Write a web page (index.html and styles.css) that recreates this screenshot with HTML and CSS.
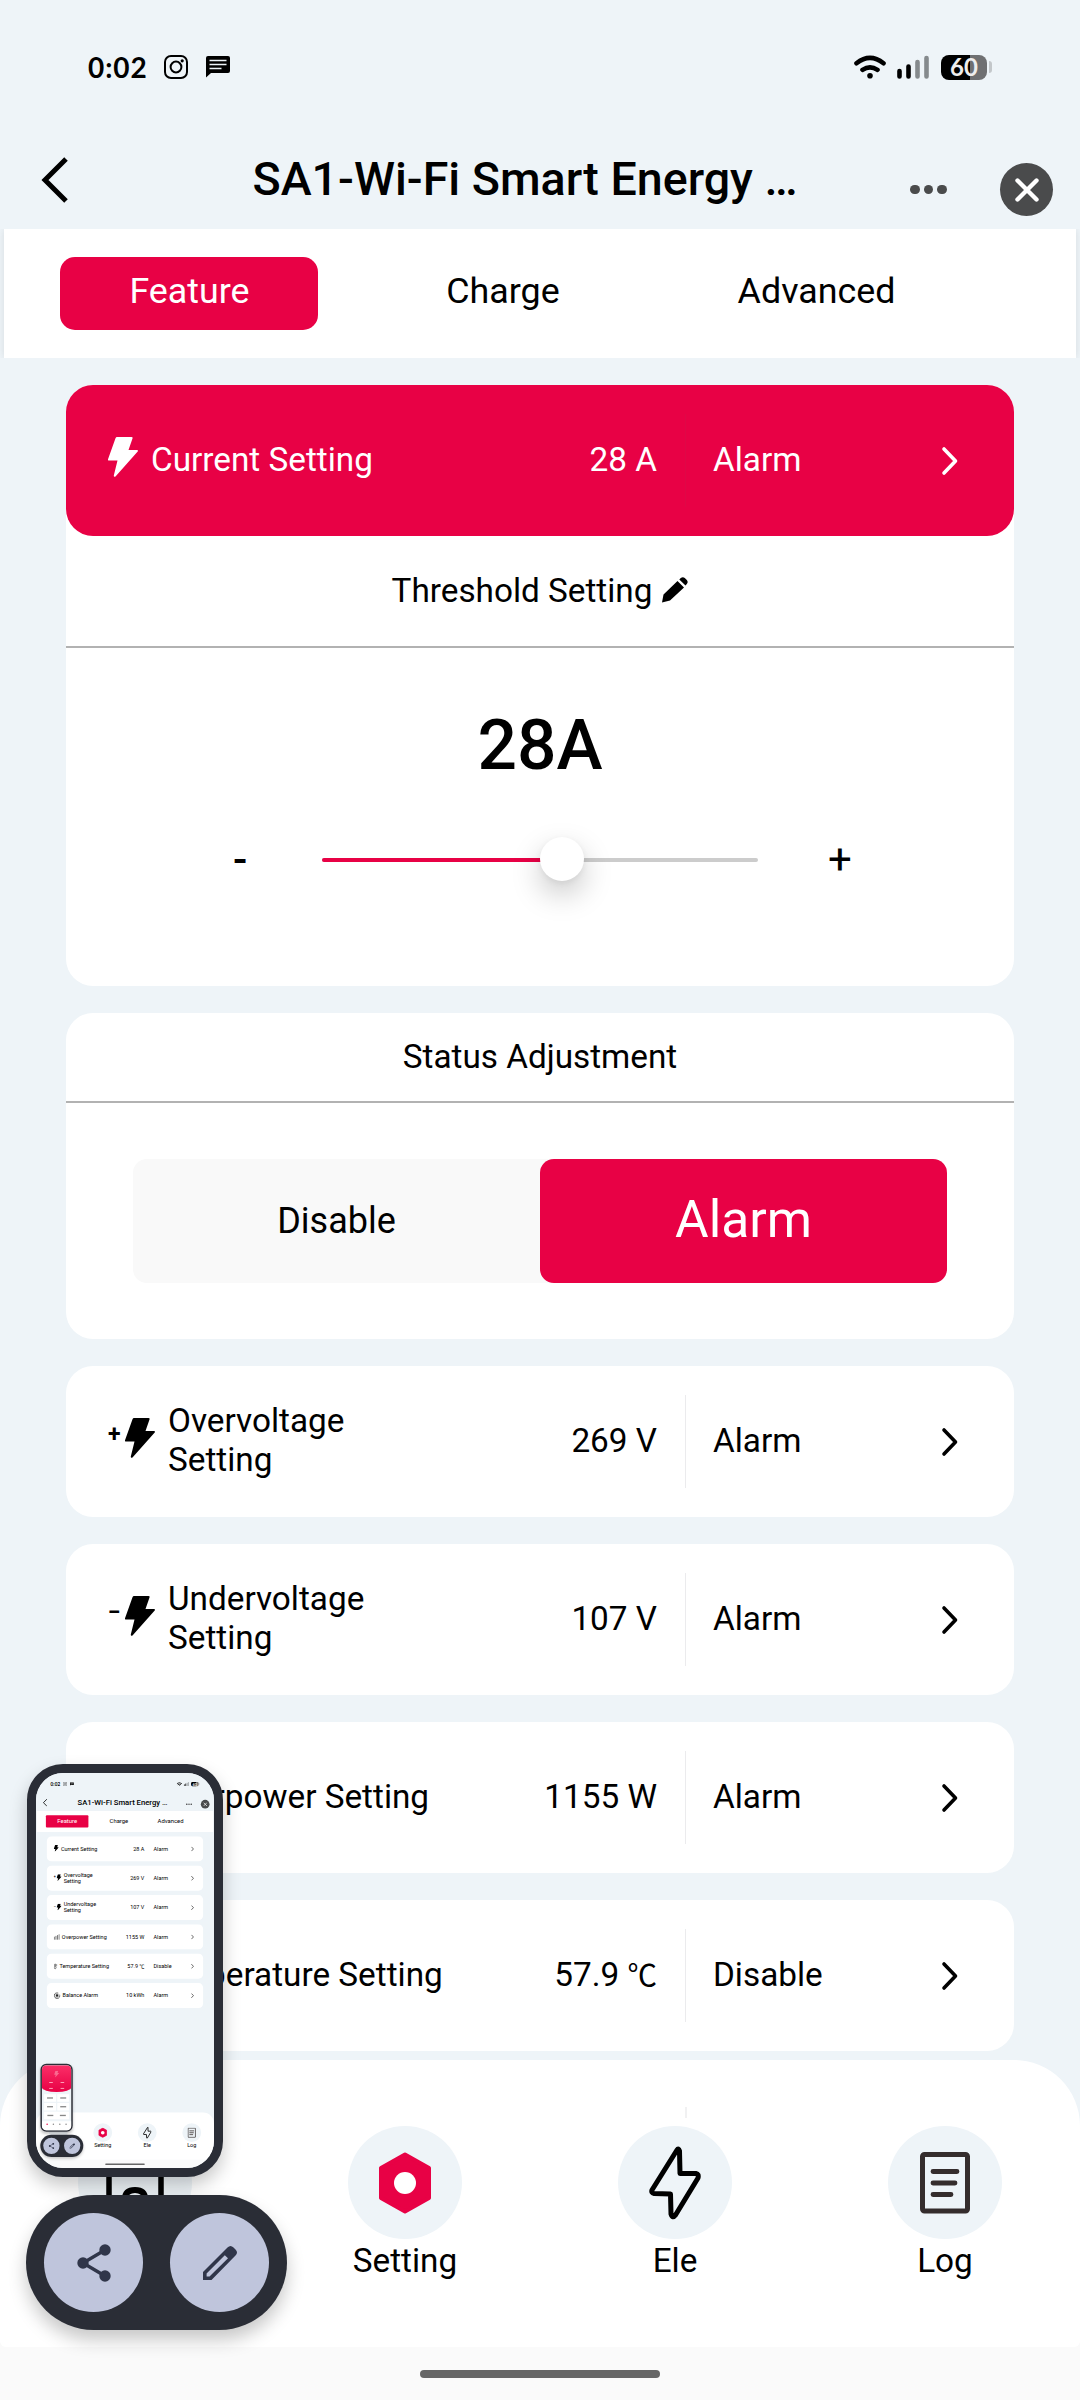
FILE: index.html
```html
<!DOCTYPE html>
<html lang="en">

<head>
    <meta charset="utf-8">
    <meta name="viewport" content="width=device-width, initial-scale=1.0">
    <title>Smart Energy</title>
    <link rel="stylesheet" href="styles.css">
</head>

<body>
    <!-- icons -->
    <svg class="sprite" width="0" height="0">
        <symbol id="i-bolt" viewBox="0 0 30 40">
            <path d="M9 0h14.500q1.500 0 1 1.500L20.500 13H29q1.500 0 .7 1.500L7.500 39.500q-1.800 1-1.700-1L9.500 23.500H1q-1.400 0-.9-1.500L7.500 1.200Q8 0 9 0z" fill="currentColor" />
        </symbol>
        <symbol id="i-next" viewBox="0 0 18 30">
            <path d="M3 3l11.500 12L3 27" fill="none" stroke="currentColor" stroke-width="3.600" stroke-linecap="round" stroke-linejoin="round" />
        </symbol>
        <symbol id="i-back" viewBox="0 0 28 46">
            <path d="M25 2L4 23l21 21" fill="none" stroke="#000" stroke-width="5" />
        </symbol>
        <symbol id="i-ins" viewBox="0 0 24 24">
            <rect x="1" y="1" width="22" height="22" rx="6" fill="none" stroke="#000" stroke-width="2" />
            <circle cx="12" cy="12" r="5.400" fill="none" stroke="#000" stroke-width="2" />
            <circle cx="18.200" cy="5.800" r="1.600" />
        </symbol>
        <symbol id="i-chat" viewBox="0 0 24 22">
            <path d="M2 0h20q2 0 2 2v13q0 2-2 2H5l-5 4.500V2Q0 0 2 0z" />
            <path d="M3.500 4.500h17M3.500 8.500h17M3.500 12.500h12" stroke="#eef4f8" stroke-width="1.500" />
        </symbol>
        <symbol id="i-wifi" viewBox="0 0 32 24">
            <path d="M2.500 8.300Q16-2.500 29.500 8.300M8.500 14.800q7.500-5 15 0" fill="none" stroke="#000" stroke-width="4.600" stroke-linecap="round" />
            <circle cx="16" cy="20.800" r="2.800" />
        </symbol>
        <symbol id="i-signal" viewBox="0 0 32 24">
            <path d="M2.500 16v5.500M11.500 11.500v10" stroke="#000" stroke-width="4.600" stroke-linecap="round" />
            <path d="M20.500 7v14.500M29.500 3v18.500" stroke="#858a8d" stroke-width="4.600" stroke-linecap="round" />
        </symbol>
        <symbol id="i-hex" viewBox="0 0 54 62">
            <path d="M27 2.500L51 16v30L27 59.500 3 46V16z" fill="#e80145" stroke="#e80145" stroke-width="4" stroke-linejoin="round" />
            <circle cx="27" cy="31" r="11" fill="#fff" />
        </symbol>
        <symbol id="i-ele" viewBox="0 0 54 74">
            <path d="M29 4L4 44q-1 3 2 3.500l16.500.5L23 68q1.500 5 4.500 1L50 32q1-4-2-4.500H32L31.500 5Q30.500 1.500 29 4z" fill="none" stroke="#000" stroke-width="5" stroke-linejoin="round" />
        </symbol>
        <symbol id="i-log" viewBox="0 0 50 62">
            <rect x="2.500" y="2.500" width="45" height="56.500" rx="2" fill="none" stroke="#352d2d" stroke-width="5" />
            <path d="M13 19.500h24M13 31h22M13 42.500h18" stroke="#352d2d" stroke-width="4.800" stroke-linecap="round" />
        </symbol>
        <symbol id="i-home" viewBox="0 0 60 64">
            <path d="M4 4h52v56H4z" fill="none" stroke="#000" stroke-width="5.500" />
            <path d="M20 60V48q0-9 10-9t10 9v12" fill="none" stroke="#000" stroke-width="6" />
        </symbol>
        <symbol id="i-share" viewBox="0 0 34 38">
            <path d="M28 6L6 19l22 13" fill="none" stroke="#30364a" stroke-width="3.400" />
            <circle cx="28" cy="6" r="5.700" fill="#30364a" />
            <circle cx="6" cy="19" r="5.700" fill="#30364a" />
            <circle cx="28" cy="32" r="5.700" fill="#30364a" />
        </symbol>
        <symbol id="i-edit" viewBox="0 0 34 34">
            <path fill-rule="evenodd" d="M0 26L24.500 1.500q3-3 6 0l2 2q3 3 0 6L8.500 34H0zM3.600 27.600v2.900h2.900L25 12.300 21.800 9.200z" fill="#30364a" />
        </symbol>
    </svg>

    <div class="page">
        <div class="status">
            <span class="time">0:02</span>
            <svg class="ins"><use href="#i-ins" /></svg>
            <svg class="chat"><use href="#i-chat" /></svg>
            <svg class="wifi"><use href="#i-wifi" /></svg>
            <svg class="signal"><use href="#i-signal" /></svg>
            <span class="battery">60</span>
            <span class="battery_cap"></span>
        </div>

        <div class="header">
            <svg class="back"><use href="#i-back" /></svg>
            <h1>SA1-Wi-Fi Smart Energy …</h1>
            <div class="more"><i></i><i></i><i></i></div>
            <div class="close"><svg viewBox="0 0 24 24"><path d="M2.500 2.500l19 19M21.500 2.500l-19 19" /></svg></div>
        </div>

        <div class="tabs">
            <span class="tab on">Feature</span>
            <span class="tab">Charge</span>
            <span class="tab">Advanced</span>
        </div>

        <div class="list">
            <div class="open">
                <div class="row active">
                    <svg class="bolt"><use href="#i-bolt" /></svg>
                    <span class="name">Current Setting</span>
                    <span class="value">28 A</span>
                    <span class="state">Alarm</span>
                    <svg class="next"><use href="#i-next" /></svg>
                </div>
                <div class="panel_title threshold">
                    Threshold Setting
                    <svg class="pen" viewBox="0 0 26 26">
                        <path d="M0 25.500l1.500-8L15.500 4 22 10.500 8 23.500zM17.300 2.500l1.500-1.500q2-1.600 4 0l2 2q1.700 2 0 4L23.500 8.500z" />
                    </svg>
                </div>
                <div class="panel_body">
                    <p class="number">28A</p>
                    <div class="slider">
                        <span class="minus">-</span>
                        <div class="track">
                            <div class="fill"></div>
                            <div class="thumb"></div>
                        </div>
                        <span class="plus">+</span>
                    </div>
                </div>
            </div>

            <div class="adjust">
                <div class="panel_title">Status Adjustment</div>
                <div class="switch">
                    <span>Disable</span>
                    <span class="on">Alarm</span>
                </div>
            </div>

            <div class="row">
                <span class="sign">+</span>
                <svg class="bolt"><use href="#i-bolt" /></svg>
                <span class="name">Overvoltage<br>Setting</span>
                <span class="value">269 V</span>
                <span class="state">Alarm</span>
                <svg class="next"><use href="#i-next" /></svg>
            </div>
            <div class="row">
                <span class="sign">−</span>
                <svg class="bolt"><use href="#i-bolt" /></svg>
                <span class="name">Undervoltage<br>Setting</span>
                <span class="value">107 V</span>
                <span class="state">Alarm</span>
                <svg class="next"><use href="#i-next" /></svg>
            </div>
            <div class="row">
                <svg class="bars" viewBox="0 0 44 44"><path d="M4 20v22M16 14v28M28 8v34M40 2v40" /></svg>
                <span class="name">Overpower Setting</span>
                <span class="value">1155 W</span>
                <span class="state">Alarm</span>
                <svg class="next"><use href="#i-next" /></svg>
            </div>
            <div class="row">
                <svg class="temp" viewBox="0 0 28 44"><path d="M7 27V7q0-4 4-4t4 4v20q5 3 3 9-3 6-7 6t-7-6q-2-6 3-9zM25 4v18" /></svg>
                <span class="name">Temperature Setting</span>
                <span class="value">57.9 <span class="unit">℃</span></span>
                <span class="state">Disable</span>
                <svg class="next"><use href="#i-next" /></svg>
            </div>
        </div>

        <div class="bottom">
            <div class="nav">
                <div class="item"><div class="dot"><svg class="home"><use href="#i-home" /></svg></div>Home</div>
                <div class="item"><div class="dot"><svg class="hex"><use href="#i-hex" /></svg></div>Setting</div>
                <div class="item"><div class="dot"><svg class="ele"><use href="#i-ele" /></svg></div>Ele</div>
                <div class="item"><div class="dot"><svg class="log"><use href="#i-log" /></svg></div>Log</div>
                <div class="tick"></div>
            </div>
            <div class="gesture"></div>
        </div>

        <!-- screenshot preview -->
        <div class="phone">
            <div class="screen">
                <div class="page">
                    <div class="status">
                        <span class="time">0:02</span>
                        <svg class="ins"><use href="#i-ins" /></svg>
                        <svg class="chat"><use href="#i-chat" /></svg>
                        <svg class="wifi"><use href="#i-wifi" /></svg>
                        <svg class="signal"><use href="#i-signal" /></svg>
                        <span class="battery">60</span>
                        <span class="battery_cap"></span>
                    </div>
                    <div class="header">
                        <svg class="back"><use href="#i-back" /></svg>
                        <h1>SA1-Wi-Fi Smart Energy …</h1>
                        <div class="more"><i></i><i></i><i></i></div>
                        <div class="close"><svg viewBox="0 0 24 24"><path d="M2.500 2.500l19 19M21.500 2.500l-19 19" /></svg></div>
                    </div>
                    <div class="tabs">
                        <span class="tab on">Feature</span>
                        <span class="tab">Charge</span>
                        <span class="tab">Advanced</span>
                    </div>
                    <div class="list">
                        <div class="row">
                            <svg class="bolt"><use href="#i-bolt" /></svg>
                            <span class="name">Current Setting</span>
                            <span class="value">28 A</span>
                            <span class="state">Alarm</span>
                            <svg class="next"><use href="#i-next" /></svg>
                        </div>
                        <div class="row">
                            <span class="sign">+</span>
                            <svg class="bolt"><use href="#i-bolt" /></svg>
                            <span class="name">Overvoltage<br>Setting</span>
                            <span class="value">269 V</span>
                            <span class="state">Alarm</span>
                            <svg class="next"><use href="#i-next" /></svg>
                        </div>
                        <div class="row">
                            <span class="sign">−</span>
                            <svg class="bolt"><use href="#i-bolt" /></svg>
                            <span class="name">Undervoltage<br>Setting</span>
                            <span class="value">107 V</span>
                            <span class="state">Alarm</span>
                            <svg class="next"><use href="#i-next" /></svg>
                        </div>
                        <div class="row">
                            <svg class="bars" viewBox="0 0 44 44"><path d="M4 20v22M16 14v28M28 8v34M40 2v40" /></svg>
                            <span class="name">Overpower Setting</span>
                            <span class="value">1155 W</span>
                            <span class="state">Alarm</span>
                            <svg class="next"><use href="#i-next" /></svg>
                        </div>
                        <div class="row">
                            <svg class="temp" viewBox="0 0 28 44"><path d="M7 27V7q0-4 4-4t4 4v20q5 3 3 9-3 6-7 6t-7-6q-2-6 3-9zM25 4v18" /></svg>
                            <span class="name">Temperature Setting</span>
                            <span class="value">57.9 <span class="unit">℃</span></span>
                            <span class="state">Disable</span>
                            <svg class="next"><use href="#i-next" /></svg>
                        </div>
                        <div class="row">
                            <svg class="balance" viewBox="0 0 44 44"><path d="M30 4.500a19 19 0 1 0 10 11M16 13h12v8H16zM16 21h12v9H16z" /></svg>
                            <span class="name">Balance Alarm</span>
                            <span class="value">10 kWh</span>
                            <span class="state">Alarm</span>
                            <svg class="next"><use href="#i-next" /></svg>
                        </div>
                    </div>
                    <div class="bottom">
                        <div class="nav">
                            <div class="item"><div class="dot"></div></div>
                            <div class="item"><div class="dot"><svg class="hex"><use href="#i-hex" /></svg></div>Setting</div>
                            <div class="item"><div class="dot"><svg class="ele"><use href="#i-ele" /></svg></div>Ele</div>
                            <div class="item"><div class="dot"><svg class="log"><use href="#i-log" /></svg></div>Log</div>
                        </div>
                        <div class="gesture"></div>
                    </div>
                    <div class="phone">
                        <div class="screen inner">
                            <div class="hero">
                                <svg class="bolt"><use href="#i-bolt" /></svg>
                                <i></i><i></i><i></i><i></i>
                            </div>
                            <div class="tiles">
                                <div><i></i></div>
                                <div><i></i></div>
                                <div><i></i></div>
                                <div><i></i></div>
                                <div class="wide"><i></i><i></i></div>
                            </div>
                            <div class="foot"><i></i><i></i><i></i><i></i></div>
                        </div>
                    </div>
                    <div class="tools">
                        <span><svg class="share"><use href="#i-share" /></svg></span>
                        <span><svg class="edit"><use href="#i-edit" /></svg></span>
                    </div>
                </div>
            </div>
        </div>
        <div class="tools">
            <span><svg class="share"><use href="#i-share" /></svg></span>
            <span><svg class="edit"><use href="#i-edit" /></svg></span>
        </div>
    </div>
</body>

</html>
```
FILE: styles.css
```css
* {
    padding: 0;
    margin: 0;
    box-sizing: border-box;
}

body {
    width: 1080px;
    height: 2400px;
    overflow: hidden;
    font-family: Roboto, "Noto Sans CJK SC", sans-serif;
    color: #000;
}

.sprite {
    position: absolute;
}

svg {
    display: block;
    flex-shrink: 0;
}

.page {
    position: relative;
    width: 1080px;
    height: 2400px;
    overflow: hidden;
    background: #eef4f8;
    font-size: 33.3px;
}

/* status bar */
.status {
    height: 130px;
    padding: 4px 88px 0;
    display: flex;
    align-items: center;
}

.time {
    width: 76px;
    margin-top: -1px;
    font-family: Lato, sans-serif;
    font-size: 28px;
    font-weight: bold;
    letter-spacing: .9px;
}

.ins {
    width: 24px;
    height: 24px;
    margin-right: 18px;
}

.chat {
    width: 24px;
    height: 22px;
}

.wifi {
    width: 32px;
    height: 24px;
    margin-left: auto;
    margin-right: 11px;
}

.signal {
    width: 32px;
    height: 24px;
    margin-right: 12px;
}

.battery {
    width: 46px;
    height: 25px;
    line-height: 24px;
    border-radius: 8px;
    background: linear-gradient(to right, #000 29px, #6f7072 29px);
    color: #eee;
    font-family: Lato, sans-serif;
    font-size: 24px;
    font-weight: bold;
    text-align: center;
}

.battery_cap {
    width: 3px;
    height: 12px;
    margin-left: 2px;
    border-radius: 0 3px 3px 0;
    background: #c3c7ca;
}

/* title bar */
.header {
    height: 99px;
    padding: 0 27px 0 41px;
    display: flex;
    align-items: center;
}

.back {
    width: 28px;
    height: 46px;
}

.header h1 {
    flex: 1;
    margin-top: -2px;
    padding-left: 71px;
    font-size: 46.6px;
    font-weight: 500;
    text-align: center;
    white-space: nowrap;
}

.more {
    width: 90px;
    margin-top: 20px;
    display: flex;
    gap: 4px;
}

.more i {
    width: 9.5px;
    height: 9.5px;
    border-radius: 50%;
    background: #4a4b4c;
}

.close {
    width: 53px;
    height: 53px;
    margin-top: 20px;
    border-radius: 50%;
    background: #4a4b4c;
    display: flex;
    align-items: center;
    justify-content: center;
}

.close svg {
    width: 24px;
    height: 24px;
}

.close path {
    stroke: #fff;
    stroke-width: 4.4;
    stroke-linecap: round;
}

/* tabs */
.tabs {
    height: 129px;
    margin: 0 4px;
    padding: 28px 56px;
    background: #fff;
    box-shadow: 0 0 8px rgba(0, 0, 0, .1);
    clip-path: inset(0 -4px);
    display: flex;
    gap: 55.5px;
}

.tab {
    width: 258px;
    height: 73px;
    line-height: 69px;
    padding-left: 1px;
    border-radius: 15px;
    font-size: 35.8px;
    text-align: center;
}

.tab.on {
    background: #e80145;
    color: #fff;
}

/* cards */
.list {
    padding: 27px 66px 0;
    display: flex;
    flex-direction: column;
    gap: 27px;
}

.open {
    height: 601px;
    border-radius: 27px;
    background: #fff;
}

.row {
    height: 151px;
    padding: 0 55px 0 42px;
    border-radius: 27px;
    background: #fff;
    display: flex;
    align-items: center;
}

.row.active {
    background: #e80145;
    color: #fff;
}

.sign {
    width: 17px;
    margin-top: -14px;
    font-size: 23px;
    font-weight: bold;
}

.bolt {
    width: 30px;
    height: 40px;
    margin-top: -8px;
}

.bars {
    width: 36px;
    height: 44px;
}

.temp {
    width: 21px;
    height: 44px;
}

.balance {
    width: 40px;
    height: 40px;
}

.bars path,
.temp path,
.balance path {
    fill: none;
    stroke: #000;
    stroke-width: 4;
}

.name {
    flex: 1;
    margin: -3px 0 0 13px;
    line-height: 39px;
    white-space: nowrap;
}

.value {
    height: 39px;
    margin: -3px 28px 0 0;
    line-height: 39px;
}

.unit {
    font-size: 29.5px;
    line-height: 1;
}

.state {
    width: 256px;
    height: 93px;
    line-height: 91px;
    padding-left: 27px;
    border-left: 1px solid #ebebed;
}

.active .state {
    border-color: #df0847;
}

.next {
    width: 18px;
    height: 30px;
}

.panel_title {
    height: 90px;
    line-height: 87px;
    border-bottom: 2px solid #b2b2b2;
    text-align: center;
}

.threshold {
    height: 112px;
    padding-bottom: 2px;
    display: flex;
    align-items: center;
    justify-content: center;
}

.pen {
    width: 26px;
    height: 26px;
    margin-left: 10px;
}

.number {
    height: 192px;
    line-height: 196px;
    font-size: 69.5px;
    font-weight: 500;
    text-align: center;
}

.slider {
    display: flex;
    align-items: center;
    height: 40px;
    font-size: 42px;
    font-weight: 500;
}

.minus {
    width: 89px;
    margin: -2px 0 0 167px;
}

.track {
    position: relative;
    width: 436px;
    height: 4px;
    border-radius: 2px;
    background: #ccc;
}

.fill {
    width: 240px;
    height: 4px;
    border-radius: 2px;
    background: #e80145;
}

.thumb {
    position: absolute;
    left: 218px;
    top: -21px;
    width: 44px;
    height: 44px;
    border-radius: 50%;
    background: #fff;
    box-shadow: 0 13px 30px rgba(0, 0, 0, .22), 0 2px 6px rgba(0, 0, 0, .06);
}

.plus {
    margin: -1px 0 0 70px;
    font-weight: 400;
}

.adjust {
    height: 326px;
    border-radius: 27px;
    background: #fff;
}

.switch {
    height: 124px;
    margin: 56px 67px;
    border-radius: 14px;
    background: #f9f9f9;
    display: flex;
}

.switch span {
    flex: 1;
    line-height: 124px;
    border-radius: 14px;
    font-size: 36px;
    text-align: center;
}

.switch .on {
    line-height: 121px;
    background: #e80145;
    color: #fff;
    font-size: 51.6px;
}

/* bottom nav */
.bottom {
    position: absolute;
    left: 0;
    bottom: 0;
    width: 100%;
    height: 340px;
}

.nav {
    position: relative;
    height: 287px;
    padding-top: 66px;
    border-radius: 66px 66px 6px 6px;
    background: #fff;
    box-shadow: 0 60px #fafafa;
    display: flex;
}

.item {
    flex: 1;
    line-height: 43px;
    text-align: center;
}

.dot {
    width: 114px;
    height: 113px;
    margin: 0 auto;
    border-radius: 50%;
    background: #eef4f8;
    display: flex;
    align-items: center;
    justify-content: center;
}

.home {
    width: 60px;
    height: 64px;
}

.hex {
    width: 54px;
    height: 62px;
}

.ele {
    width: 54px;
    height: 74px;
}

.log {
    width: 50px;
    height: 62px;
}

.tick {
    position: absolute;
    left: 685px;
    top: 47px;
    width: 2px;
    height: 11px;
    background: #f1f1f2;
}

.gesture {
    position: relative;
    width: 240px;
    height: 8px;
    margin: 23px auto 0;
    border-radius: 4px;
    background: #666;
}

/* floating preview */
.phone {
    position: absolute;
    left: 27px;
    top: 1764px;
    width: 196px;
    height: 413px;
    border: 9px solid #2a2d36;
    border-radius: 36px;
    background: #2a2d36;
    box-shadow: 0 9px 18px rgba(0, 0, 0, .22);
}

.screen {
    width: 178px;
    height: 395px;
    border-radius: 27px;
    background: #eef4f8;
    overflow: hidden;
}

.screen .page {
    transform: scale(.1648);
    transform-origin: 0 0;
}

.screen .tab.on {
    border-radius: 6px;
}

.screen .state {
    border-color: transparent;
}

.hero {
    height: 162px;
    padding: 34px 20px 0;
    border-radius: 0 0 50% 50% / 0 0 26px 26px;
    background: linear-gradient(#fb2f68, #e80145);
    display: grid;
    grid-template-columns: 1fr 1fr;
    justify-items: center;
}

.hero .bolt {
    grid-column: 1 / 3;
    margin: 0;
    color: #f96a91;
}

.hero i {
    width: 22px;
    height: 5px;
    margin-top: 10px;
    background: #fbc;
}

.tiles {
    padding: 14px 13px 0;
    display: grid;
    grid-template-columns: 1fr 1fr;
    gap: 7px;
}

.tiles div {
    height: 46px;
    background: #fff;
    display: flex;
    align-items: center;
    justify-content: space-around;
}

.tiles .wide {
    grid-column: 1 / 3;
}

.tiles i {
    width: 36px;
    height: 8px;
    background: #888;
}

.foot {
    height: 60px;
    margin-top: 12px;
    padding: 14px 12px;
    background: #fff;
    display: flex;
    justify-content: space-around;
}

.foot i {
    width: 9px;
    height: 9px;
    border-radius: 50%;
    background: #888;
}

.foot i:first-child {
    background: #e80145;
}

.tools {
    position: absolute;
    left: 26px;
    top: 2195px;
    width: 261px;
    height: 135px;
    padding: 0 18px;
    border-radius: 68px;
    background: #2a2d36;
    box-shadow: 0 10px 18px rgba(0, 0, 0, .22);
    display: flex;
    align-items: center;
    justify-content: space-between;
}

.tools span {
    width: 99px;
    height: 99px;
    border-radius: 50%;
    background: #bfc5dc;
    display: flex;
    align-items: center;
    justify-content: center;
}

.share {
    width: 34px;
    height: 38px;
}

.edit {
    width: 34px;
    height: 34px;
}
```
